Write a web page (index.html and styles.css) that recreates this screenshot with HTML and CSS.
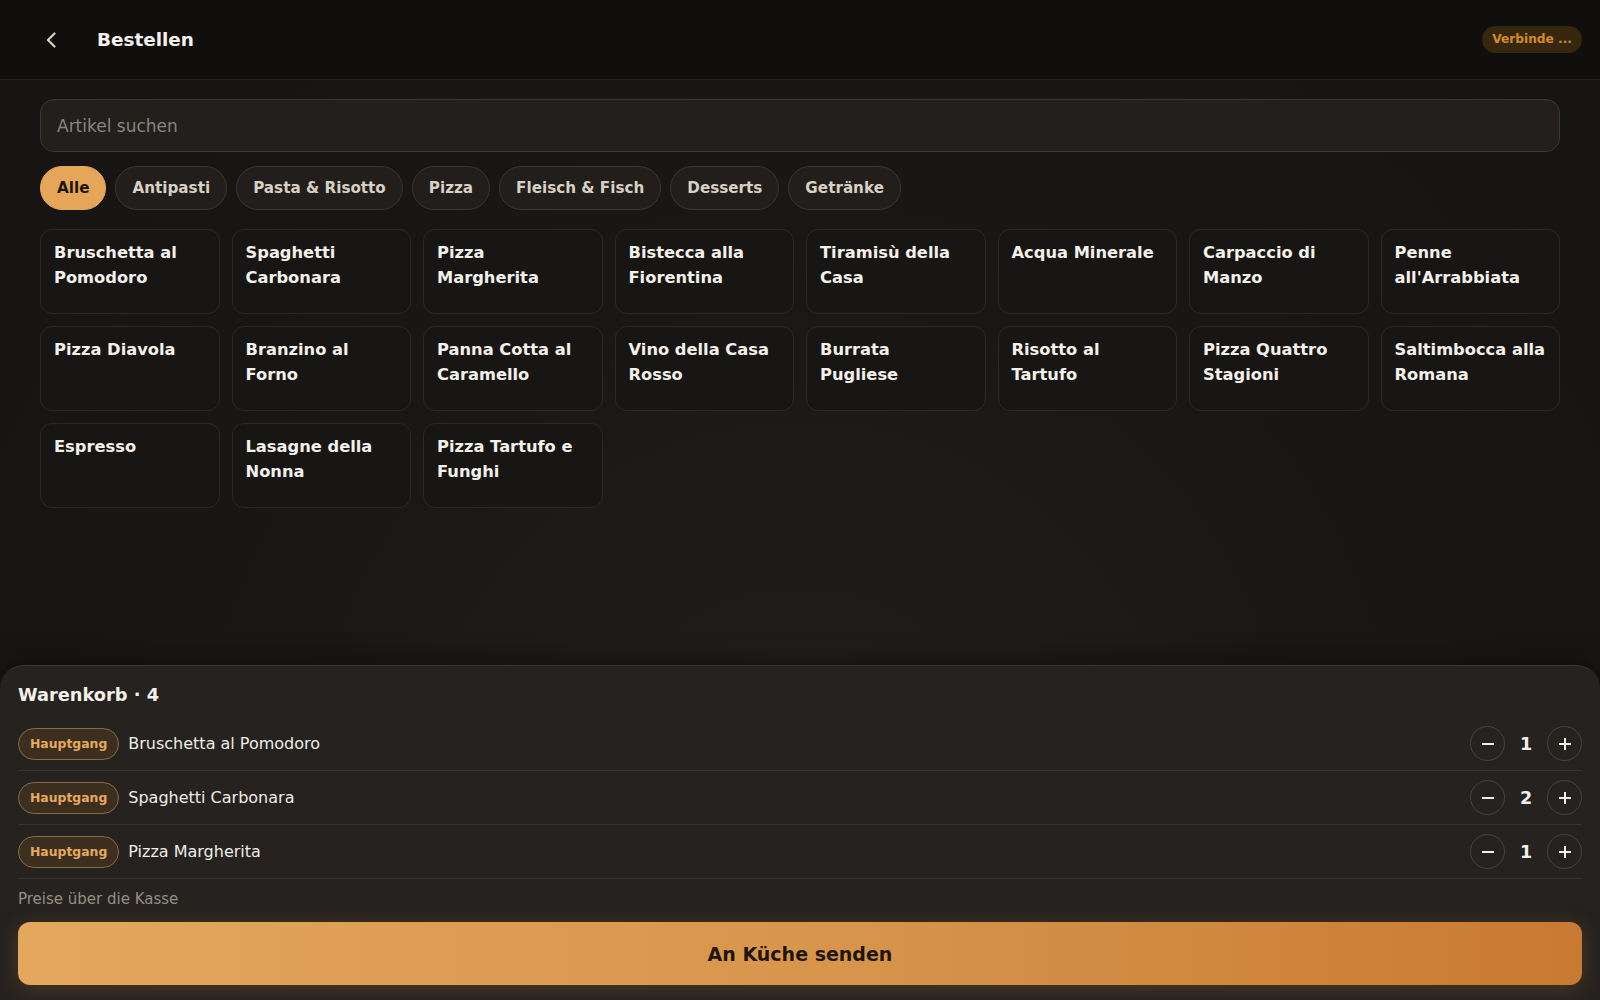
FILE: index.html
```html
<!DOCTYPE html>
<html lang="de">
<head>
    <meta charset="UTF-8">
    <meta name="viewport" content="width=device-width, initial-scale=1.0">
    <title>Bestellen</title>
    <link rel="stylesheet" href="styles.css">
</head>
<body>
    <header class="topbar">
        <button class="back-btn" aria-label="Zurück">
            <svg width="12" height="16" viewBox="0 0 12 16"><polyline points="9.5 1.5 3 8 9.5 14.5" fill="none" stroke="currentColor" stroke-width="2.2" stroke-linecap="round" stroke-linejoin="round"/></svg>
        </button>
        <h1 class="title">Bestellen</h1>
        <span class="status">Verbinde ...</span>
    </header>

    <main class="menu">
        <input class="search" type="text" placeholder="Artikel suchen">

        <div class="chips">
            <button class="chip active">Alle</button>
            <button class="chip">Antipasti</button>
            <button class="chip">Pasta &amp; Risotto</button>
            <button class="chip">Pizza</button>
            <button class="chip">Fleisch &amp; Fisch</button>
            <button class="chip">Desserts</button>
            <button class="chip">Getränke</button>
        </div>

        <div class="items">
            <button class="item">Bruschetta al Pomodoro</button>
            <button class="item">Spaghetti Carbonara</button>
            <button class="item">Pizza Margherita</button>
            <button class="item">Bistecca alla Fiorentina</button>
            <button class="item">Tiramisù della Casa</button>
            <button class="item">Acqua Minerale</button>
            <button class="item">Carpaccio di Manzo</button>
            <button class="item">Penne all'Arrabbiata</button>
            <button class="item">Pizza Diavola</button>
            <button class="item">Branzino al Forno</button>
            <button class="item">Panna Cotta al Caramello</button>
            <button class="item">Vino della Casa Rosso</button>
            <button class="item">Burrata Pugliese</button>
            <button class="item">Risotto al Tartufo</button>
            <button class="item">Pizza Quattro Stagioni</button>
            <button class="item">Saltimbocca alla Romana</button>
            <button class="item">Espresso</button>
            <button class="item">Lasagne della Nonna</button>
            <button class="item">Pizza Tartufo e Funghi</button>
        </div>
    </main>

    <section class="cart">
        <h2 class="cart-title">Warenkorb · 4</h2>

        <div class="cart-row">
            <span class="course">Hauptgang</span>
            <span class="cart-name">Bruschetta al Pomodoro</span>
            <div class="qty">
                <button class="qty-btn" aria-label="Weniger"><svg width="14" height="14" viewBox="0 0 14 14"><line x1="1" y1="7" x2="13" y2="7" stroke="currentColor" stroke-width="2"/></svg></button>
                <span class="qty-num">1</span>
                <button class="qty-btn" aria-label="Mehr"><svg width="14" height="14" viewBox="0 0 14 14"><line x1="1" y1="7" x2="13" y2="7" stroke="currentColor" stroke-width="2"/><line x1="7" y1="1" x2="7" y2="13" stroke="currentColor" stroke-width="2"/></svg></button>
            </div>
        </div>

        <div class="cart-row">
            <span class="course">Hauptgang</span>
            <span class="cart-name">Spaghetti Carbonara</span>
            <div class="qty">
                <button class="qty-btn" aria-label="Weniger"><svg width="14" height="14" viewBox="0 0 14 14"><line x1="1" y1="7" x2="13" y2="7" stroke="currentColor" stroke-width="2"/></svg></button>
                <span class="qty-num">2</span>
                <button class="qty-btn" aria-label="Mehr"><svg width="14" height="14" viewBox="0 0 14 14"><line x1="1" y1="7" x2="13" y2="7" stroke="currentColor" stroke-width="2"/><line x1="7" y1="1" x2="7" y2="13" stroke="currentColor" stroke-width="2"/></svg></button>
            </div>
        </div>

        <div class="cart-row">
            <span class="course">Hauptgang</span>
            <span class="cart-name">Pizza Margherita</span>
            <div class="qty">
                <button class="qty-btn" aria-label="Weniger"><svg width="14" height="14" viewBox="0 0 14 14"><line x1="1" y1="7" x2="13" y2="7" stroke="currentColor" stroke-width="2"/></svg></button>
                <span class="qty-num">1</span>
                <button class="qty-btn" aria-label="Mehr"><svg width="14" height="14" viewBox="0 0 14 14"><line x1="1" y1="7" x2="13" y2="7" stroke="currentColor" stroke-width="2"/><line x1="7" y1="1" x2="7" y2="13" stroke="currentColor" stroke-width="2"/></svg></button>
            </div>
        </div>

        <p class="note">Preise über die Kasse</p>
        <button class="send-btn">An Küche senden</button>
    </section>
</body>
</html>
```

FILE: styles.css
```css
* {
    box-sizing: border-box;
}

body {
    margin: 0;
    height: 100vh;
    display: flex;
    flex-direction: column;
    overflow: hidden;
    font-family: "DejaVu Sans", sans-serif;
    color: #f2eee8;
    background: radial-gradient(ellipse at 50% 80%, #221f1b 0%, #1a1816 45%, #161412 100%);
}

button {
    font-family: inherit;
    cursor: pointer;
}

/* top bar */
.topbar {
    height: 80px;
    flex: none;
    display: flex;
    align-items: center;
    padding: 0 18px 0 29px;
    background-color: #100f0e;
    border-bottom: 1px solid #26231f;
}

.back-btn {
    width: 44px;
    height: 44px;
    display: flex;
    align-items: center;
    justify-content: center;
    border: none;
    background: none;
    color: #d8d2c8;
    padding: 0;
}

.title {
    margin: 0 0 0 24px;
    font-size: 18.4px;
    font-weight: bold;
    color: #f4f0ea;
}

.status {
    margin-left: auto;
    height: 27px;
    line-height: 27px;
    padding: 0 10px;
    border-radius: 14px;
    font-size: 12.2px;
    font-weight: bold;
    color: #d98b22;
    background-color: #36270f;
}

/* menu */
.menu {
    flex: 1;
    min-height: 0;
    padding: 19px 40px;
}

.search {
    width: 100%;
    height: 53px;
    padding: 0 16px;
    font-family: inherit;
    font-size: 17px;
    color: #f2eee8;
    background-color: #221f1c;
    border: 1px solid #3d3833;
    border-radius: 14px;
    outline: none;
}

.search::placeholder {
    color: #8a847c;
}

.chips {
    display: flex;
    gap: 9px;
    margin-top: 14px;
}

.chip {
    height: 44px;
    padding: 0 16px;
    font-size: 15.2px;
    font-weight: bold;
    color: #d8d0c4;
    background-color: #211e1b;
    border: 1px solid #3a3530;
    border-radius: 22px;
}

.chip.active {
    color: #1c140b;
    background-color: #e6a65a;
    border-color: #e6a65a;
}

.items {
    display: grid;
    grid-template-columns: repeat(8, 1fr);
    grid-auto-rows: 85px;
    gap: 12px;
    margin-top: 19px;
}

.item {
    display: flex;
    align-items: flex-start;
    text-align: left;
    padding: 11px 13px;
    font-size: 16.3px;
    font-weight: bold;
    line-height: 24.5px;
    color: #f4f0ea;
    background-color: #181614;
    border: 1px solid #2c2925;
    border-radius: 12px;
}

/* cart panel */
.cart {
    flex: none;
    padding: 17px 18px 15px;
    background-color: #252220;
    border-top: 1px solid #3a3632;
    border-radius: 24px 24px 0 0;
    box-shadow: 0 -6px 24px rgba(0, 0, 0, 0.35);
}

.cart-title {
    margin: 0 0 10px;
    font-size: 17.8px;
    line-height: 24px;
    font-weight: bold;
    color: #f4f0ea;
}

.cart-row {
    display: flex;
    align-items: center;
    gap: 9px;
    padding: 9px 0;
    border-bottom: 1px solid #36322e;
}

.course {
    height: 32px;
    line-height: 30px;
    padding: 0 11px;
    font-size: 12.4px;
    font-weight: bold;
    color: #e6a95c;
    background-color: #3d2f1f;
    border: 1px solid #8a6a3f;
    border-radius: 16px;
}

.cart-name {
    font-size: 16px;
    color: #f0ece6;
}

.qty {
    margin-left: auto;
    display: flex;
    align-items: center;
}

.qty-btn {
    width: 35px;
    height: 35px;
    padding: 0;
    display: flex;
    align-items: center;
    justify-content: center;
    color: #f2eee8;
    background: none;
    border: 1px solid #48433d;
    border-radius: 50%;
}

.qty-num {
    width: 42px;
    text-align: center;
    font-size: 17.5px;
    font-weight: bold;
    color: #f4f0ea;
}

.note {
    margin: 10px 0 13px;
    font-size: 15px;
    line-height: 20px;
    color: #958e85;
}

.send-btn {
    width: 100%;
    height: 63px;
    font-size: 19px;
    font-weight: bold;
    color: #1f150b;
    background: linear-gradient(90deg, #e3a75d 0%, #d8964c 50%, #c97a32 100%);
    border: none;
    border-radius: 12px;
    box-shadow: 0 4px 22px rgba(214, 140, 60, 0.22);
}
```
